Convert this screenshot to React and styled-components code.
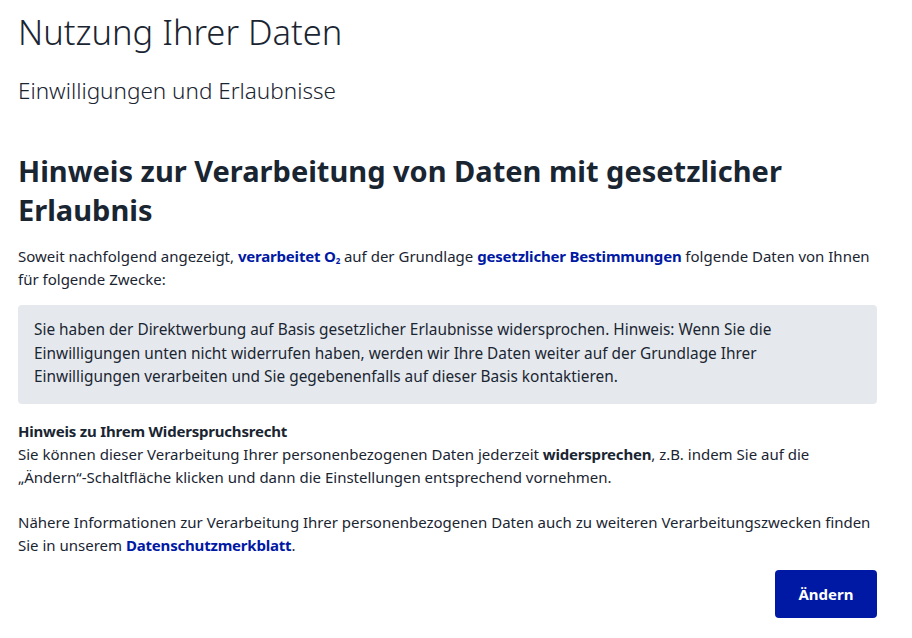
import React from 'react';
import styled, { createGlobalStyle } from 'styled-components';

const GlobalStyle = createGlobalStyle`
  body {
    margin: 0;
    background: #fff;
    font-family: "Noto Sans", "Open Sans", sans-serif;
    color: #1a2532;
  }
`;

const Page = styled.main`
  padding: 11px 35px 20px 18px;
`;

const Title = styled.h1`
  font-size: 34.5px;
  font-weight: 300;
  line-height: 42px;
  margin: 0 0 24px;
`;

const Subtitle = styled.h2`
  font-size: 22.5px;
  font-weight: 300;
  line-height: 28px;
  margin: 0 0 46px;
`;

const Heading = styled.h3`
  font-size: 29px;
  font-weight: 700;
  line-height: 39px;
  margin: 0 0 16px;
`;

const Text = styled.p`
  font-size: 15px;
  line-height: 23px;
  margin: 0 0 ${p => p.$gap || 0}px;
`;

const Link = styled.a`
  color: #0019a5;
  font-weight: 700;
  letter-spacing: -0.2px;
  text-decoration: none;
`;

const Sub = styled.sub`
  font-size: 8px;
  line-height: 0;
  vertical-align: -2px;
`;

const Notice = styled.div`
  background: #e5e9ed;
  border-radius: 4px;
  padding: 13px 16px 15px;
  margin: 14px 0 16px;
  font-size: 15.4px;
  line-height: 23.5px;
`;

const Strong = styled.strong`
  font-weight: 700;
  letter-spacing: -0.2px;
`;

const Actions = styled.div`
  display: flex;
  justify-content: flex-end;
  margin-top: 13px;
`;

const Button = styled.button`
  background: #0019a5;
  color: #fff;
  border: none;
  border-radius: 4px;
  width: 102px;
  height: 48px;
  font-family: inherit;
  font-size: 15px;
  font-weight: 700;
  cursor: pointer;
`;

export default function App() {
  return (
    <>
      <GlobalStyle />
      <Page>
        <Title>Nutzung Ihrer Daten</Title>
        <Subtitle>Einwilligungen und Erlaubnisse</Subtitle>
        <Heading>Hinweis zur Verarbeitung von Daten mit gesetzlicher Erlaubnis</Heading>
        <Text>
          Soweit nachfolgend angezeigt, <Link href="#">verarbeitet O<Sub>2</Sub></Link> auf der Grundlage{' '}
          <Link href="#">gesetzlicher Bestimmungen</Link> folgende Daten von Ihnen für folgende Zwecke:
        </Text>
        <Notice>
          Sie haben der Direktwerbung auf Basis gesetzlicher Erlaubnisse widersprochen. Hinweis: Wenn Sie die
          Einwilligungen unten nicht widerrufen haben, werden wir Ihre Daten weiter auf der Grundlage Ihrer Einwilligungen
          verarbeiten und Sie gegebenenfalls auf dieser Basis kontaktieren.
        </Notice>
        <Text>
          <Strong>Hinweis zu Ihrem Widerspruchsrecht</Strong>
        </Text>
        <Text $gap={22}>
          Sie können dieser Verarbeitung Ihrer personenbezogenen Daten jederzeit <Strong>widersprechen</Strong>, z.B. indem Sie auf die
          „Ändern“-Schaltfläche klicken und dann die Einstellungen entsprechend vornehmen.
        </Text>
        <Text>
          Nähere Informationen zur Verarbeitung Ihrer personenbezogenen Daten auch zu weiteren Verarbeitungszwecken finden
          Sie in unserem <Link href="#">Datenschutzmerkblatt</Link>.
        </Text>
        <Actions>
          <Button>Ändern</Button>
        </Actions>
      </Page>
    </>
  );
}
